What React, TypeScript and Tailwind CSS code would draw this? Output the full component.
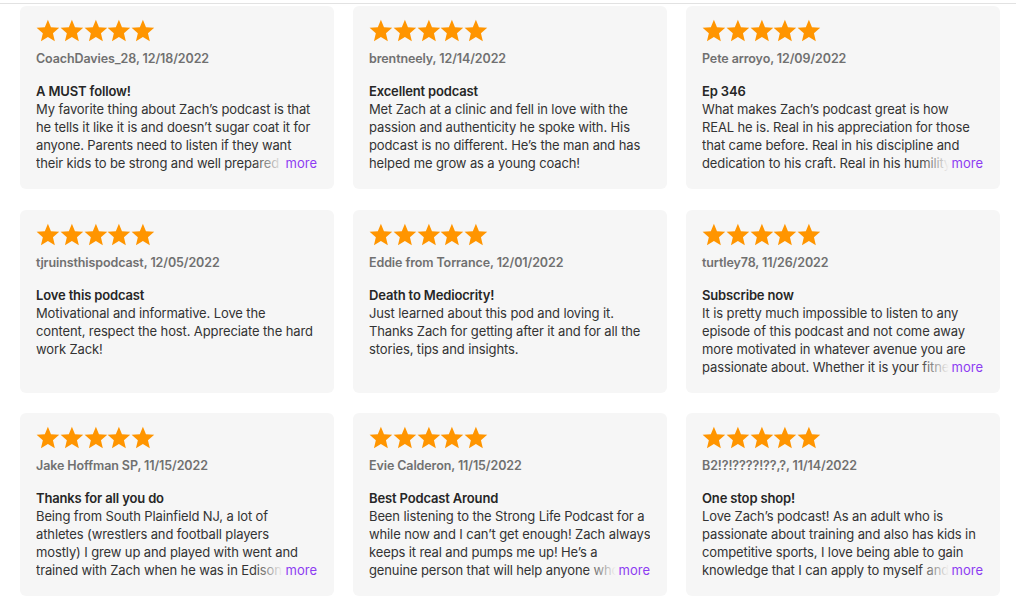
import React from "react";

type Review = {
  author: string;
  date: string;
  title: string;
  lines: string[];
  more?: boolean;
};

// line breaks kept as in the store listing
const reviews: Review[] = [
  {
    author: "CoachDavies_28",
    date: "12/18/2022",
    title: "A MUST follow!",
    lines: [
      "My favorite thing about Zach’s podcast is that",
      "he tells it like it is and doesn’t sugar coat it for",
      "anyone. Parents need to listen if they want",
      "their kids to be strong and well prepared for the real world",
    ],
    more: true,
  },
  {
    author: "brentneely",
    date: "12/14/2022",
    title: "Excellent podcast",
    lines: [
      "Met Zach at a clinic and fell in love with the",
      "passion and authenticity he spoke with. His",
      "podcast is no different. He’s the man and has",
      "helped me grow as a young coach!",
    ],
  },
  {
    author: "Pete arroyo",
    date: "12/09/2022",
    title: "Ep 346",
    lines: [
      "What makes Zach’s podcast great is how",
      "REAL he is. Real in his appreciation for those",
      "that came before. Real in his discipline and",
      "dedication to his craft. Real in his humility and his",
    ],
    more: true,
  },
  {
    author: "tjruinsthispodcast",
    date: "12/05/2022",
    title: "Love this podcast",
    lines: [
      "Motivational and informative. Love the",
      "content, respect the host. Appreciate the hard",
      "work Zack!",
    ],
  },
  {
    author: "Eddie from Torrance",
    date: "12/01/2022",
    title: "Death to Mediocrity!",
    lines: [
      "Just learned about this pod and loving it.",
      "Thanks Zach for getting after it and for all the",
      "stories, tips and insights.",
    ],
  },
  {
    author: "turtley78",
    date: "11/26/2022",
    title: "Subscribe now",
    lines: [
      "It is pretty much impossible to listen to any",
      "episode of this podcast and not come away",
      "more motivated in whatever avenue you are",
      "passionate about. Whether it is your fitness and your",
    ],
    more: true,
  },
  {
    author: "Jake Hoffman SP",
    date: "11/15/2022",
    title: "Thanks for all you do",
    lines: [
      "Being from South Plainfield NJ, a lot of",
      "athletes (wrestlers and football players",
      "mostly) I grew up and played with went and",
      "trained with Zach when he was in Edison and they",
    ],
    more: true,
  },
  {
    author: "Evie Calderon",
    date: "11/15/2022",
    title: "Best Podcast Around",
    lines: [
      "Been listening to the Strong Life Podcast for a",
      "while now and I can’t get enough! Zach always",
      "keeps it real and pumps me up! He’s a",
      "genuine person that will help anyone who asks",
    ],
    more: true,
  },
  {
    author: "B2!?!????!??,?",
    date: "11/14/2022",
    title: "One stop shop!",
    lines: [
      "Love Zach’s podcast! As an adult who is",
      "passionate about training and also has kids in",
      "competitive sports, I love being able to gain",
      "knowledge that I can apply to myself and to my",
    ],
    more: true,
  },
];

function Star() {
  return (
    <svg viewBox="0 0 24 24" className="h-[24px] w-[23.8px]" fill="#ff9500">
      <polygon points="12,0.6 15.1,8.1 23.4,8.8 17.1,14.2 19,22.4 12,18 5,22.4 6.9,14.2 0.6,8.8 8.9,8.1" />
    </svg>
  );
}

function ReviewCard({ review }: { review: Review }) {
  return (
    <div className="flex h-[183px] flex-col rounded-md bg-[#f6f6f6] pl-4 pr-[17px] pt-[13px]">
      <div className="flex">
        {[0, 1, 2, 3, 4].map((i) => (
          <Star key={i} />
        ))}
      </div>
      <div className="mt-[7px] text-[12.5px] font-semibold leading-[18px] tracking-[-0.1px] text-[#707070]">
        {review.author}, {review.date}
      </div>
      <div className="mt-[14px] text-[13px] font-semibold leading-[18px] tracking-[-0.15px] text-[#262626]">
        {review.title}
      </div>
      <div className="relative overflow-hidden text-[13px] leading-[18px] tracking-[-0.12px] text-[#333]">
        {review.lines.map((line, i) => (
          <div key={i} className="whitespace-nowrap">
            {line}
          </div>
        ))}
        {review.more && (
          <div className="absolute bottom-0 right-0 flex h-[18px] items-center">
            <div className="h-full w-[30px] bg-gradient-to-r from-[#f6f6f6]/0 to-[#f6f6f6]" />
            <span className="bg-[#f6f6f6] pl-[3px] tracking-normal text-[#8d3cf2]">more</span>
          </div>
        )}
      </div>
    </div>
  );
}

export default function App() {
  return (
    <div
      className="min-h-screen bg-white"
      style={{ fontFamily: "Inter, 'Noto Sans', sans-serif" }}
    >
      <div className="pt-[3px]">
        <div className="h-px bg-[#e2e2e2]" />
      </div>
      <div className="mt-[2px] grid grid-cols-[314px_314px_314px] gap-x-[19px] gap-y-[20.5px] pl-5">
        {reviews.map((r) => (
          <ReviewCard key={r.author} review={r} />
        ))}
      </div>
    </div>
  );
}
